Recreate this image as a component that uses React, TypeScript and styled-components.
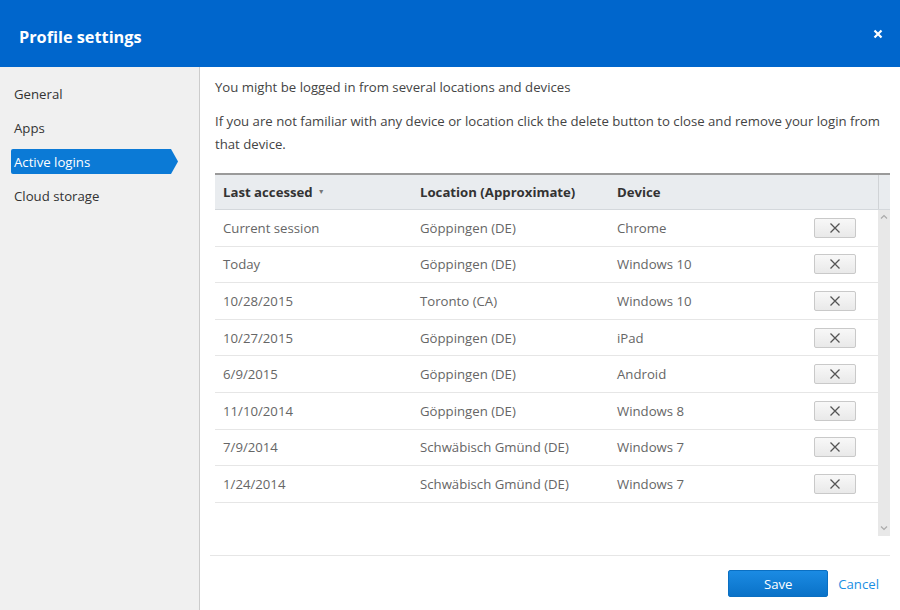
import React from "react";
import styled, { createGlobalStyle } from "styled-components";

const GlobalStyle = createGlobalStyle`
  html, body {
    margin: 0;
    padding: 0;
    background: #ffffff;
  }
  body {
    font-family: "Open Sans", "Noto Sans", "Liberation Sans", sans-serif;
  }
  * {
    box-sizing: border-box;
  }
`;

type Login = {
    accessed: string
    location: string
    device: string
}

const logins: Login[] = [
    {accessed: "Current session", location: "Göppingen (DE)", device: "Chrome"},
    {accessed: "Today", location: "Göppingen (DE)", device: "Windows 10"},
    {accessed: "10/28/2015", location: "Toronto (CA)", device: "Windows 10"},
    {accessed: "10/27/2015", location: "Göppingen (DE)", device: "iPad"},
    {accessed: "6/9/2015", location: "Göppingen (DE)", device: "Android"},
    {accessed: "11/10/2014", location: "Göppingen (DE)", device: "Windows 8"},
    {accessed: "7/9/2014", location: "Schwäbisch Gmünd (DE)", device: "Windows 7"},
    {accessed: "1/24/2014", location: "Schwäbisch Gmünd (DE)", device: "Windows 7"},
];

const menu = ["General", "Apps", "Active logins", "Cloud storage"];

export default function App() {
    const [active, setActive] = React.useState("Active logins");

    return <>
        <GlobalStyle/>
        <StyledDialog>
            <StyledHeader>
                <h1>Profile settings</h1>
                <CloseButton aria-label="Close">
                    <svg width="10" height="10" viewBox="0 0 10 10">
                        <path d="M1.5 1.5 L8.5 8.5 M8.5 1.5 L1.5 8.5" stroke="#fff" strokeWidth="2.2"/>
                    </svg>
                </CloseButton>
            </StyledHeader>
            <StyledBody>
                <Sidebar>
                    {menu.map(item =>
                        <MenuItem key={item} $active={item === active} onClick={() => setActive(item)}>
                            {item}
                        </MenuItem>
                    )}
                </Sidebar>
                <Content>
                    <Intro>You might be logged in from several locations and devices</Intro>
                    <Intro $spaced>
                        If you are not familiar with any device or location click the delete button to close and
                        remove your login from that device.
                    </Intro>
                    <Table>
                        <HeadRow>
                            <HeadCells>
                                <HeadCell>Last accessed<SortMark>▼</SortMark></HeadCell>
                                <HeadCell>Location (Approximate)</HeadCell>
                                <HeadCell>Device</HeadCell>
                                <HeadCell/>
                            </HeadCells>
                            <HeadGutter/>
                        </HeadRow>
                        <TableBody>
                            <Rows>
                                {logins.map(login =>
                                    <Row key={login.accessed}>
                                        <Cell>{login.accessed}</Cell>
                                        <Cell>{login.location}</Cell>
                                        <Cell>{login.device}</Cell>
                                        <Cell>
                                            <DeleteButton aria-label="Delete">
                                                <svg width="12" height="10" viewBox="0 0 12 10">
                                                    <path d="M1.5 0.5 L10.5 9.5 M10.5 0.5 L1.5 9.5" stroke="#555"
                                                          strokeWidth="1.3"/>
                                                </svg>
                                            </DeleteButton>
                                        </Cell>
                                    </Row>
                                )}
                            </Rows>
                            <Scrollbar>
                                <svg width="8" height="6" viewBox="0 0 8 6">
                                    <path d="M1 4.5 L4 1.5 L7 4.5" stroke="#aaa" strokeWidth="1.2" fill="none"/>
                                </svg>
                                <svg width="8" height="6" viewBox="0 0 8 6">
                                    <path d="M1 1.5 L4 4.5 L7 1.5" stroke="#aaa" strokeWidth="1.2" fill="none"/>
                                </svg>
                            </Scrollbar>
                        </TableBody>
                    </Table>
                    <Footer>
                        <SaveButton type="button">Save</SaveButton>
                        <CancelLink href="#">Cancel</CancelLink>
                    </Footer>
                </Content>
            </StyledBody>
        </StyledDialog>
    </>;
}

const StyledDialog = styled.div`
  width: 900px;
  height: 610px;
  display: flex;
  flex-direction: column;
  overflow: hidden;
`

const StyledHeader = styled.header`
  height: 67px;
  flex: none;
  background-color: #0066cc;
  display: flex;
  align-items: center;
  justify-content: space-between;
  padding: 0 17px 0 19px;

  h1 {
    margin: 0;
    color: #ffffff;
    font-size: 16.3px;
    font-weight: 700;
    padding-top: 6px;
  }
`

const CloseButton = styled.button`
  border: none;
  background: transparent;
  padding: 0;
  display: flex;
  cursor: pointer;
`

const StyledBody = styled.div`
  flex: 1;
  display: flex;
  min-height: 0;
`

const Sidebar = styled.nav`
  width: 200px;
  flex: none;
  background-color: #f0f0f0;
  border-right: 1px solid #cccccc;
  padding: 14px 21px 0 11px;
  display: flex;
  flex-direction: column;
  gap: 9px;
`

const MenuItem = styled.div<{ $active?: boolean }>`
  height: 25px;
  display: flex;
  align-items: center;
  padding-left: 3px;
  font-size: 13.2px;
  color: ${p => p.$active ? "#ffffff" : "#333333"};
  background-color: ${p => p.$active ? "#0b7ad6" : "transparent"};
  border-radius: 2px 0 0 2px;
  clip-path: ${p => p.$active
          ? "polygon(0 0, calc(100% - 7px) 0, 100% 50%, calc(100% - 7px) 100%, 0 100%)"
          : "none"};
  cursor: pointer;
`

const Content = styled.main`
  flex: 1;
  display: flex;
  flex-direction: column;
  padding: 9px 10px 0 15px;
  min-width: 0;
`

const Intro = styled.p<{ $spaced?: boolean }>`
  margin: ${p => p.$spaced ? "11px 0 0 0" : "0"};
  font-size: 13.2px;
  line-height: 23px;
  color: #444444;
`

const Table = styled.div`
  margin-top: 17px;
  display: flex;
  flex-direction: column;
`

const HeadRow = styled.div`
  display: flex;
  height: 37px;
  background-color: #e9ecef;
  border-top: 2px solid #9a9a9a;
  border-bottom: 1px solid #d4d8dc;
`

const columns = "197px 197px 1fr 64px";

const HeadCells = styled.div`
  flex: 1;
  display: grid;
  grid-template-columns: ${columns};
  align-items: center;
`

const HeadCell = styled.div`
  padding-left: 8px;
  font-size: 13.2px;
  font-weight: 700;
  color: #333333;
  white-space: nowrap;
`

const SortMark = styled.span`
  font-size: 7px;
  color: #777777;
  vertical-align: 3px;
  margin-left: 5px;
`

const HeadGutter = styled.div`
  width: 12px;
  border-left: 1px solid #d0d3d6;
`

const TableBody = styled.div`
  display: flex;
  height: 326px;
`

const Rows = styled.div`
  flex: 1;
  display: flex;
  flex-direction: column;
`

const Row = styled.div`
  display: grid;
  grid-template-columns: ${columns};
  align-items: center;
  height: 36.6px;
  border-bottom: 1px solid #e6e6e6;
`

const Cell = styled.div`
  padding-left: 8px;
  font-size: 13.2px;
  color: #666666;
  white-space: nowrap;
  display: flex;
  align-items: center;

  &:last-child {
    padding-left: 0;
  }
`

const DeleteButton = styled.button`
  width: 42px;
  height: 20px;
  padding: 0;
  display: flex;
  align-items: center;
  justify-content: center;
  border: 1px solid #c9c9c9;
  border-radius: 2px;
  background: linear-gradient(#f8f8f8, #e9e9e9);
  cursor: pointer;
`

const Scrollbar = styled.div`
  width: 12px;
  background-color: #e8e8e8;
  display: flex;
  flex-direction: column;
  justify-content: space-between;
  align-items: center;
  padding: 4px 0 5px 0;
`

const Footer = styled.footer`
  margin: 19px 0 0 -5px;
  border-top: 1px solid #e6e6e6;
  display: flex;
  align-items: center;
  justify-content: flex-end;
  gap: 10px;
  padding: 14px 11px 0 0;
`

const SaveButton = styled.button`
  width: 100px;
  height: 27px;
  border: 1px solid #0a6fc2;
  border-radius: 2px;
  background: linear-gradient(#1b8be3, #0a72c8);
  color: #ffffff;
  font-family: inherit;
  font-size: 13.2px;
  cursor: pointer;
`

const CancelLink = styled.a`
  color: #1a8fe3;
  font-size: 13.2px;
  text-decoration: none;
`
